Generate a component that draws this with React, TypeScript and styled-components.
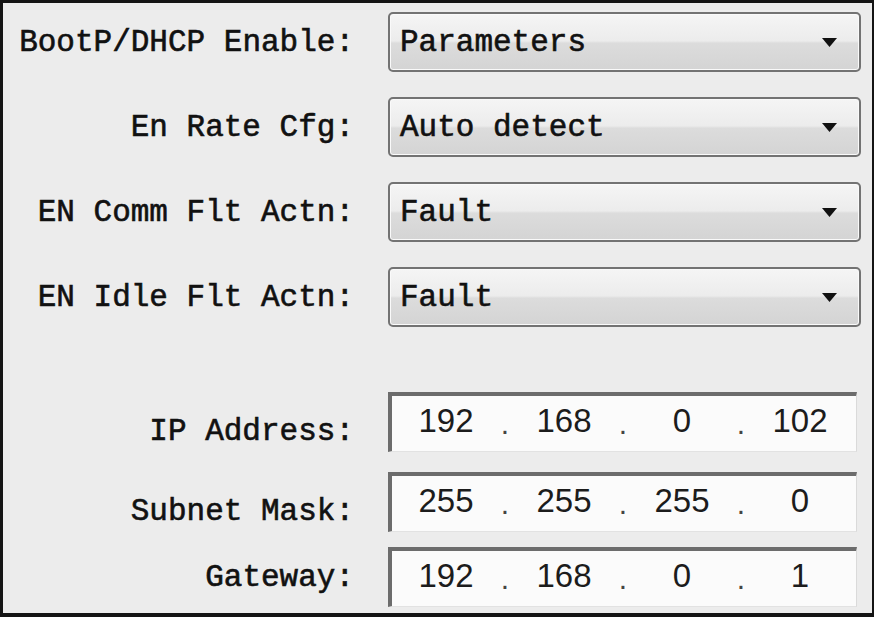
import React from "react";
import styled, { createGlobalStyle } from "styled-components";

const GlobalStyle = createGlobalStyle`
  html, body {
    margin: 0;
    padding: 0;
    background: #ececec;
  }
`;

type ComboSetting = { label: string; value: string };
type IpSetting = { label: string; octets: Array<string>; gap: number; drop: number };

const comboSettings: Array<ComboSetting> = [
  { label: "BootP/DHCP Enable:", value: "Parameters" },
  { label: "En Rate Cfg:", value: "Auto detect" },
  { label: "EN Comm Flt Actn:", value: "Fault" },
  { label: "EN Idle Flt Actn:", value: "Fault" },
];

const ipSettings: Array<IpSetting> = [
  { label: "IP Address:", octets: ["192", "168", "0", "102"], gap: 65, drop: 18 },
  { label: "Subnet Mask:", octets: ["255", "255", "255", "0"], gap: 20, drop: 18 },
  { label: "Gateway:", octets: ["192", "168", "0", "1"], gap: 15, drop: 0 },
];

function DropArrow() {
  return (
    <svg width="15" height="10" viewBox="0 0 15 10">
      <path d="M0 1 H15 L7.5 10 Z" fill="#111" />
    </svg>
  );
}

export default function App() {
  return (
    <>
      <GlobalStyle />
      <Frame>
        {comboSettings.map((s, i) => (
          <Row key={s.label} $gap={i === 0 ? 0 : 25}>
            <Label>{s.label}</Label>
            <Combo>
              <ComboText>{s.value}</ComboText>
              <DropArrow />
            </Combo>
          </Row>
        ))}
        {ipSettings.map((s) => (
          <Row key={s.label} $gap={s.gap}>
            <Label $drop={s.drop}>{s.label}</Label>
            <IpField>
              {s.octets.map((o, i) => (
                <React.Fragment key={i}>
                  {i > 0 && <IpDot>.</IpDot>}
                  <IpOctet>{o}</IpOctet>
                </React.Fragment>
              ))}
            </IpField>
          </Row>
        ))}
      </Frame>
    </>
  );
}

const Frame = styled.div`
  box-sizing: border-box;
  width: 874px;
  height: 617px;
  border-style: solid;
  border-color: #141414;
  border-width: 3px 2px 4px 3px;
  background: #ececec;
  padding: 9px 0 0 0;
  display: flex;
  flex-direction: column;
  font-family: "Liberation Mono", "DejaVu Sans Mono", monospace;
`;

const Row = styled.div<{ $gap: number }>`
  display: grid;
  grid-template-columns: 351px 473px;
  column-gap: 34px;
  align-items: center;
  height: 60px;
  margin-top: ${({ $gap }) => $gap}px;
`;

const Label = styled.div<{ $drop?: number }>`
  text-align: right;
  font-size: 31px;
  color: #111;
  -webkit-text-stroke: 0.6px #111;
  white-space: pre;
  padding-top: ${({ $drop }) => $drop || 0}px;
`;

const Combo = styled.div`
  box-sizing: border-box;
  height: 60px;
  border: 2px solid #737373;
  border-radius: 5px;
  box-shadow: inset 0 0 0 1px #fafafa;
  background: linear-gradient(
    to bottom,
    #f5f5f5 0%,
    #ececec 48%,
    #dcdcdc 52%,
    #d4d4d4 100%
  );
  display: flex;
  align-items: center;
  justify-content: space-between;
  padding: 0 22px 0 10px;
`;

const ComboText = styled.span`
  font-size: 31px;
  color: #111;
  -webkit-text-stroke: 0.6px #111;
  white-space: pre;
`;

const IpField = styled.div`
  box-sizing: border-box;
  width: 469px;
  height: 60px;
  border-style: solid;
  border-width: 4px 1px 1px 4px;
  border-color: #6c6c6c #dadada #e2e2e2 #6c6c6c;
  background: #fbfbfb;
  display: grid;
  grid-template-columns: 104px 14px 104px 14px 104px 14px 104px;
  align-items: center;
  padding: 0 0 6px 2px;
  font-family: "Liberation Sans", Arial, sans-serif;
  color: #1c1c1c;
`;

const IpOctet = styled.span`
  font-size: 33px;
  text-align: center;
`;

const IpDot = styled.span`
  font-size: 30px;
  text-align: center;
  color: #444;
  padding-top: 6px;
`;
